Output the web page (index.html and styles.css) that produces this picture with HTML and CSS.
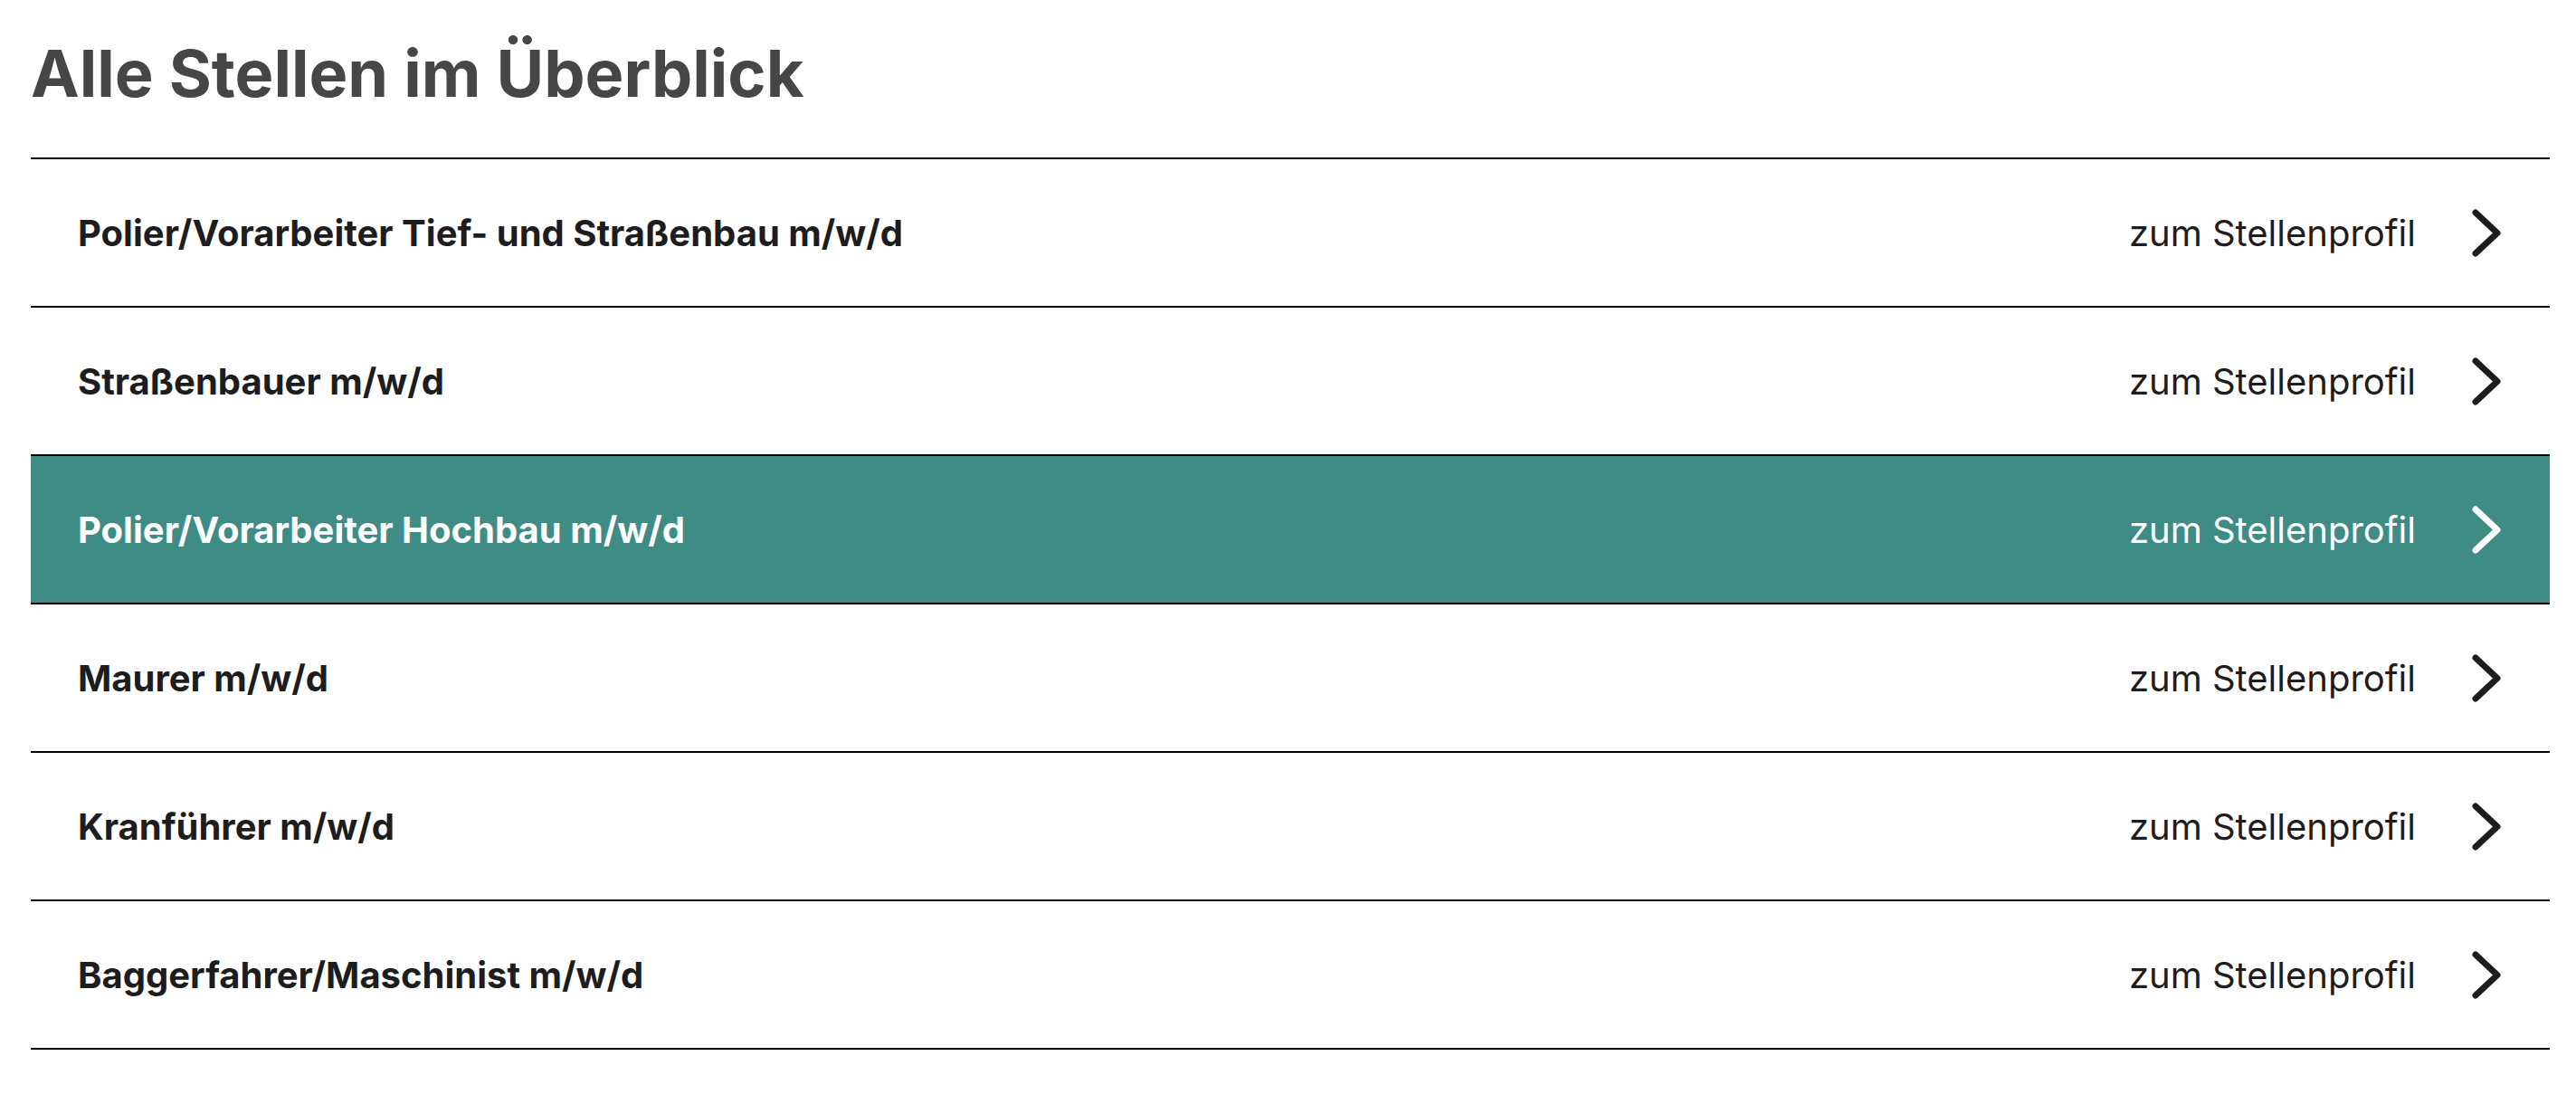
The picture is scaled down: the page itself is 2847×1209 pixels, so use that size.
FILE: index.html
```html
<!DOCTYPE html>
<html lang="de">
<head>
<meta charset="utf-8">
<title>Alle Stellen im Überblick</title>
<link rel="stylesheet" href="styles.css">
</head>
<body>
<main class="jobs">
  <h1 class="jobs__title">Alle Stellen im Überblick</h1>
  <ul class="jobs__list">
    <li class="job">
      <a class="job__link" href="#">
        <span class="job__name">Polier/Vorarbeiter Tief- und Straßenbau m/w/d</span>
        <span class="job__more">zum Stellenprofil</span>
        <svg class="job__chev" viewBox="0 0 32 53" aria-hidden="true"><path d="M4 4 L28 26.5 L4 49"/></svg>
      </a>
    </li>
    <li class="job">
      <a class="job__link" href="#">
        <span class="job__name">Straßenbauer m/w/d</span>
        <span class="job__more">zum Stellenprofil</span>
        <svg class="job__chev" viewBox="0 0 32 53" aria-hidden="true"><path d="M4 4 L28 26.5 L4 49"/></svg>
      </a>
    </li>
    <li class="job job--active">
      <a class="job__link" href="#">
        <span class="job__name">Polier/Vorarbeiter Hochbau m/w/d</span>
        <span class="job__more">zum Stellenprofil</span>
        <svg class="job__chev" viewBox="0 0 32 53" aria-hidden="true"><path d="M4 4 L28 26.5 L4 49"/></svg>
      </a>
    </li>
    <li class="job">
      <a class="job__link" href="#">
        <span class="job__name">Maurer m/w/d</span>
        <span class="job__more">zum Stellenprofil</span>
        <svg class="job__chev" viewBox="0 0 32 53" aria-hidden="true"><path d="M4 4 L28 26.5 L4 49"/></svg>
      </a>
    </li>
    <li class="job">
      <a class="job__link" href="#">
        <span class="job__name">Kranführer m/w/d</span>
        <span class="job__more">zum Stellenprofil</span>
        <svg class="job__chev" viewBox="0 0 32 53" aria-hidden="true"><path d="M4 4 L28 26.5 L4 49"/></svg>
      </a>
    </li>
    <li class="job">
      <a class="job__link" href="#">
        <span class="job__name">Baggerfahrer/Maschinist m/w/d</span>
        <span class="job__more">zum Stellenprofil</span>
        <svg class="job__chev" viewBox="0 0 32 53" aria-hidden="true"><path d="M4 4 L28 26.5 L4 49"/></svg>
      </a>
    </li>
  </ul>
</main>
</body>
</html>
```
FILE: styles.css
```css
html, body {
  margin: 0;
  padding: 0;
  background: #ffffff;
}

body {
  font-family: Inter, "Noto Sans", "Liberation Sans", sans-serif;
  color: #1d1d1f;
}

.jobs {
  padding: 0 29px 0 34px;
}

.jobs__title {
  margin: 45px 0 57px 0;
  font-size: 72px;
  line-height: 1;
  font-weight: 700;
  color: #464646;
  letter-spacing: 0;
}

.jobs__list {
  list-style: none;
  margin: 0;
  padding: 0;
  border-top: 2px solid #000;
}

.job {
  border-bottom: 2px solid #000;
}

.job__link {
  display: flex;
  align-items: center;
  height: 162px;
  padding: 0 54px 0 52px;
  text-decoration: none;
  color: #1d1d1f;
}

.job__name {
  flex: 1;
  font-size: 40px;
  font-weight: 700;
}

.job__more {
  font-size: 40px;
  font-weight: 400;
  margin-right: 62px;
}

.job__chev {
  width: 32px;
  height: 53px;
  fill: none;
  stroke: currentColor;
  stroke-width: 7;
  stroke-linecap: round;
  stroke-linejoin: round;
}

.job--active .job__link {
  background: #3f8c87;
  color: #ffffff;
}
```
